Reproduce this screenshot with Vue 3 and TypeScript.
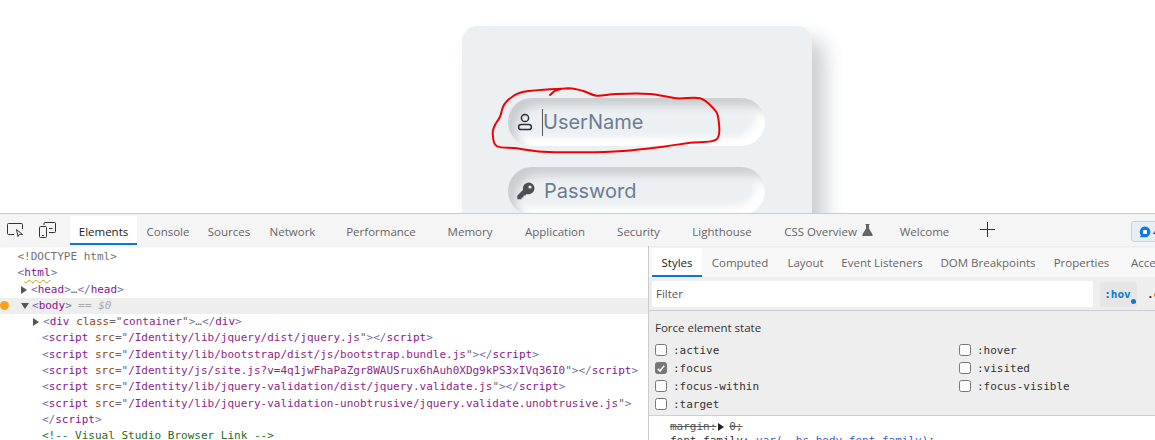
<script setup lang="ts">
const mainTabs = [
  { t: 'Elements', w: 67, active: true },
  { t: 'Console', w: 62 },
  { t: 'Sources', w: 60 },
  { t: 'Network', w: 67 },
  { t: 'Performance', w: 110 },
  { t: 'Memory', w: 68 },
  { t: 'Application', w: 102 },
  { t: 'Security', w: 65 },
  { t: 'Lighthouse', w: 102 },
  { t: 'CSS Overview', w: 111, flask: true },
  { t: 'Welcome', w: 81 },
]
const subTabs = [
  { t: 'Styles', w: 50, active: true },
  { t: 'Computed', w: 76 },
  { t: 'Layout', w: 55 },
  { t: 'Event Listeners', w: 98 },
  { t: 'DOM Breakpoints', w: 114 },
  { t: 'Properties', w: 73 },
  { t: 'Accessibility', w: 90 },
]
const scripts = [
  '/Identity/lib/jquery/dist/jquery.js',
  '/Identity/lib/bootstrap/dist/js/bootstrap.bundle.js',
  '/Identity/js/site.js?v=4q1jwFhaPaZgr8WAUSrux6hAuh0XDg9kPS3xIVq36I0',
  '/Identity/lib/jquery-validation/dist/jquery.validate.js',
]
const states = [
  [':active', ':hover'],
  [':focus', ':visited'],
  [':focus-within', ':focus-visible'],
  [':target', ''],
]
const scribble: number[][] = [
  [550, 95], [556.7, 90], [570, 88.3], [583.3, 91], [596.7, 95.7], [616.7, 94], [650, 94],
  [676.7, 98.3], [700, 98.3], [713.3, 108.3], [718.3, 118.3], [716.7, 139.3], [690, 142.7],
  [663, 146.7], [623, 151], [583, 152.3], [543, 151.7], [516.7, 148.3], [496.7, 146],
  [492.7, 133.3], [495, 125], [500, 116.7], [505, 103.3], [520, 92.7], [550, 89.3], [570, 88.3],
]
function smooth(p: number[][]): string {
  let d = `M${p[0][0]} ${p[0][1]}`
  for (let i = 0; i < p.length - 1; i++) {
    const a = p[Math.max(0, i - 1)], b = p[i], c = p[i + 1], e = p[Math.min(p.length - 1, i + 2)]
    const c1x = b[0] + (c[0] - a[0]) / 6, c1y = b[1] + (c[1] - a[1]) / 6
    const c2x = c[0] - (e[0] - b[0]) / 6, c2y = c[1] - (e[1] - b[1]) / 6
    d += `C${c1x.toFixed(1)} ${c1y.toFixed(1)} ${c2x.toFixed(1)} ${c2y.toFixed(1)} ${c[0]} ${c[1]}`
  }
  return d
}
const scribblePath = smooth(scribble)
</script>

<template>
  <div class="page">
    <section class="site">
      <div class="card">
        <div class="field">
          <svg class="ficon" width="16" height="18" viewBox="0 0 16 18" fill="none" stroke="#2b2f36" stroke-width="1.5">
            <circle cx="8" cy="5" r="3.6" />
            <rect x="1.6" y="11.4" width="12.8" height="5.2" rx="2.6" />
          </svg>
          <span class="caret"></span>
          <span class="ph">UserName</span>
        </div>
        <div class="field">
          <svg class="ficon" width="18" height="18" viewBox="0 0 18 18">
            <path fill="#4d4f54" fill-rule="evenodd" d="M11.6 0.4a5.9 5.9 0 1 1-1.9 11.5l-1.5 1.6H6.5v1.9H4.6v1.9H1.1a.8.8 0 0 1-.8-.8v-2.6a.8.8 0 0 1 .2-.5l5.6-5.6A5.9 5.9 0 0 1 11.6.4ZM13 3.4a1.6 1.6 0 1 0 0 3.2 1.6 1.6 0 0 0 0-3.2Z" />
          </svg>
          <span class="ph pw">Password</span>
        </div>
      </div>
      <svg class="scribble" width="1155" height="213" viewBox="0 0 1155 213" fill="none">
        <path :d="scribblePath" stroke="#f00000" stroke-width="2" stroke-linejoin="round" stroke-linecap="round" />
      </svg>
    </section>

    <section class="devtools">
      <header class="mainbar">
        <div class="tools">
          <svg width="17" height="16" viewBox="0 0 17 16" fill="none" stroke="#333" stroke-width="1">
            <path d="M7 12.5H1.5a1 1 0 0 1-1-1v-9a1 1 0 0 1 1-1h13a1 1 0 0 1 1 1V7" />
            <path d="M9.5 7.5l1.5 7 1.5-2.4 3 .4Z" fill="#fff" />
          </svg>
          <svg width="17" height="16" viewBox="0 0 17 16" fill="none" stroke="#333" stroke-width="1">
            <path d="M5 3V1.5a1 1 0 0 1 1-1h9.500a1 1 0 0 1 1 1v8a1 1 0 0 1-1 1H10" />
            <rect x=".5" y="4.500" width="7" height="11" rx="1" />
            <path d="M10 6.500h3.500M3 13.500h2" />
          </svg>
        </div>
        <div v-for="tab in mainTabs" :key="tab.t" class="mtab" :class="{ on: tab.active }" :style="{ width: tab.w + 'px' }">
          <span>{{ tab.t }}</span>
          <svg v-if="tab.flask" class="flask" width="11" height="12" viewBox="0 0 11 12">
            <path fill="#666" d="M3.500 0h4v1H7v3.500l3.600 6a1 1 0 0 1-.9 1.500H1.300a1 1 0 0 1-.9-1.500L4 4.500V1h-.5Z" />
          </svg>
        </div>
        <svg class="plus" width="15" height="15" viewBox="0 0 15 15" stroke="#333" stroke-width="1">
          <path d="M7.500 0v15M0 7.500h15" />
        </svg>
        <div class="chip">
          <svg width="12" height="12" viewBox="0 0 12 12">
            <path fill="#0f7ae5" d="M6 .5a5.400 5.400 0 0 1 0 10.800H.8l1.200-2A5.400 5.400 0 0 1 6 .5Z" />
            <rect x="4" y="4" width="4" height="4" rx="1" fill="#fff" />
          </svg>
          <span>4</span>
        </div>
      </header>

      <div class="panes">
        <div class="tree">
          <div class="row r0"><span class="doc">&lt;!DOCTYPE html&gt;</span></div>
          <div class="row r0"><span class="b">&lt;</span><span class="tag squig">html</span><span class="b">&gt;</span></div>
          <div class="row r1"><i class="tri right"></i><span class="b">&lt;</span><span class="tag">head</span><span class="b">&gt;</span><span class="dim">…</span><span class="b">&lt;/</span><span class="tag">head</span><span class="b">&gt;</span></div>
          <div class="row r1 sel"><em class="dot"></em><i class="tri down"></i><span class="b">&lt;</span><span class="tag">body</span><span class="b">&gt;</span><span class="eq"> == $0</span></div>
          <div class="row r2"><i class="tri right"></i><span class="b">&lt;</span><span class="tag">div</span> <span class="an">class</span><span class="dim">="</span><span class="av">container</span><span class="dim">"</span><span class="b">&gt;</span><span class="dim">…</span><span class="b">&lt;/</span><span class="tag">div</span><span class="b">&gt;</span></div>
          <div v-for="s in scripts" :key="s" class="row r3"><span class="b">&lt;</span><span class="tag">script</span> <span class="an">src</span><span class="dim">="</span><span class="av">{{ s }}</span><span class="dim">"</span><span class="b">&gt;&lt;/</span><span class="tag">script</span><span class="b">&gt;</span></div>
          <div class="row r3"><span class="b">&lt;</span><span class="tag">script</span> <span class="an">src</span><span class="dim">="</span><span class="av">/Identity/lib/jquery-validation-unobtrusive/jquery.validate.unobtrusive.js</span><span class="dim">"</span><span class="b">&gt;</span></div>
          <div class="row r3"><span class="b">&lt;/</span><span class="tag">script</span><span class="b">&gt;</span></div>
          <div class="row r3"><span class="cm">&lt;!-- Visual Studio Browser Link --&gt;</span></div>
        </div>

        <aside class="side">
          <nav class="subbar">
            <div v-for="tab in subTabs" :key="tab.t" class="stab" :class="{ on: tab.active }" :style="{ width: tab.w + 'px' }">{{ tab.t }}</div>
          </nav>
          <div class="filter">
            <div class="finput">Filter</div>
            <div class="hov">:hov<em></em></div>
            <div class="cls">.cls</div>
          </div>
          <div class="force">
            <div class="ftitle">Force element state</div>
            <div class="grid">
              <template v-for="pair in states" :key="pair[0]">
                <label v-for="st in pair" :key="st + pair[0]" class="st">
                  <template v-if="st">
                    <span class="box" :class="{ checked: st === ':focus' }">
                      <svg v-if="st === ':focus'" width="11" height="11" viewBox="0 0 11 11" fill="none" stroke="#fff" stroke-width="1.800"><path d="M2 5.800l2.400 2.400L9 2.500" /></svg>
                    </span>
                    <span>{{ st }}</span>
                  </template>
                </label>
              </template>
            </div>
          </div>
          <div class="rules">
            <div class="rule"><s class="strike">margin:</s><i class="tri right dark"></i><s class="strike">0;</s></div>
            <div class="rule two"><span class="an2">font-family</span>: <span class="fn">var(--bs-body-font-family)</span>;</div>
          </div>
        </aside>
      </div>
    </section>
  </div>
</template>

<style>
html, body { margin: 0; background: #fff; overflow: hidden; }
</style>

<style scoped>
.page { width: 1155px; height: 440px; overflow: hidden; display: flex; flex-direction: column; background: #fff; font-family: "Open Sans", "Liberation Sans", sans-serif; }
.site { position: relative; height: 213px; flex: none; overflow: hidden; padding-left: 462px; padding-top: 26px; box-sizing: border-box; }
.card { width: 350px; height: 420px; box-sizing: border-box; padding: 72px 47px 0 46px; background: #ecf0f3; border-radius: 15px; box-shadow: 13px 13px 20px #cbced1, -13px -13px 20px #ffffff; display: flex; flex-direction: column; gap: 21px; }
.field { height: 48px; border-radius: 25px; box-shadow: inset 8px 8px 8px #cbced1, inset -8px -8px 8px #ffffff; display: flex; align-items: center; padding-left: 9px; flex: none; }
.ficon { flex: none; }
.caret { width: 1px; height: 27px; background: #555; margin-left: 9px; flex: none; }
.ph { font-family: Inter, "Open Sans", sans-serif; font-size: 20px; color: #6d7c90; margin-left: 0; white-space: nowrap; }
.pw { margin-left: 9px; }
.scribble { position: absolute; left: 0; top: 0; }

.devtools { flex: 1; min-height: 0; display: flex; flex-direction: column; border-top: 1px solid #cdcdcd; background: #fff; font-size: 11.500px; color: #555; }
.mainbar { height: 32px; flex: none; display: flex; align-items: stretch; background: #f5f5f5; box-shadow: 0 1px 2px rgba(0,0,0,.08); position: relative; z-index: 1; }
.tools { width: 70px; flex: none; display: flex; align-items: center; gap: 15px; padding-left: 7px; box-sizing: border-box; }
.mtab { display: flex; align-items: center; justify-content: center; gap: 5px; flex: none; box-sizing: border-box; white-space: nowrap; color: #666; padding-top: 2px; }
.mtab.on { background: #fff; color: #222; border-bottom: 2px solid #0a78d4; padding-top: 3px; margin-bottom: 1px; margin-top: 2px; }
.flask { margin-bottom: 2px; }
.plus { margin: 8px 0 0 15px; flex: none; }
.chip { margin: 7px 0 4px 136px; flex: none; width: 40px; box-sizing: border-box; display: flex; align-items: center; gap: 2px; padding-left: 7px; background: #e9eef5; border: 1px solid #cfcfcf; border-radius: 3px; color: #333; }

.panes { flex: 1; min-height: 0; display: flex; }
.tree { width: 648px; flex: none; padding-top: 3px; overflow: hidden; font-family: "DejaVu Sans Mono", "Liberation Mono", monospace; font-size: 11px; }
.row { height: 16.300px; line-height: 16.300px; white-space: pre; position: relative; box-sizing: border-box; }
.r0 { padding-left: 17.500px; }
.r1 { padding-left: 21px; }
.r2 { padding-left: 33px; }
.r3 { padding-left: 42px; }
.sel { background: #eeeeee; }
.dot { position: absolute; left: 0; top: 3.500px; width: 9px; height: 9px; border-radius: 50%; background: #f9a11b; }
.tri { display: inline-block; margin-right: 4px; vertical-align: middle; }
.tri.right { border-left: 6px solid #555; border-top: 4.500px solid transparent; border-bottom: 4.500px solid transparent; }
.tri.down { border-top: 6px solid #555; border-left: 4.500px solid transparent; border-right: 4.500px solid transparent; margin-right: 3px; }
.tri.dark { border-left-color: #222; margin: 0 5px 0 0; }
.b { color: #6a70a8; }
.tag { color: #881391; }
.squig { text-decoration: underline wavy #c9a100 1px; text-underline-offset: 3px; }
.an { color: #994500; }
.av { color: #8f1f86; }
.dim { color: #666; }
.doc { color: #6c6f75; }
.eq { color: #aaa; font-style: italic; }
.cm { color: #236e25; }

.side { flex: 1; min-width: 0; border-left: 1px solid #ccc; display: flex; flex-direction: column; overflow: hidden; }
.subbar { height: 31px; flex: none; display: flex; padding-left: 3px; background: #f8f8f8; box-sizing: border-box; }
.stab { flex: none; display: flex; align-items: center; justify-content: center; box-sizing: border-box; white-space: nowrap; color: #666; padding-top: 2px; }
.stab.on { background: #fff; color: #222; border-bottom: 2px solid #0a78d4; margin-top: 2px; }
.filter { height: 34px; flex: none; box-sizing: border-box; display: flex; align-items: center; background: #eeeeee; padding: 1px 0 0 3px; border-bottom: 1px solid #c9ccd3; }
.finput { width: 441px; height: 26px; line-height: 26px; background: #fff; border-radius: 2px; padding-left: 4px; box-sizing: border-box; color: #555; flex: none; }
.hov { position: relative; margin-left: 7px; width: 37px; height: 25px; line-height: 25px; text-align: center; background: #e6e6e6; border-radius: 2px; color: #0a78d4; font-family: "DejaVu Sans Mono", monospace; font-size: 11px; font-weight: 700; flex: none; box-sizing: border-box; padding-right: 2px; }
.hov em { position: absolute; right: 1px; bottom: 3px; width: 5px; height: 5px; border-radius: 50%; background: #0a78d4; }
.cls { margin-left: 10px; color: #333; font-family: "DejaVu Sans Mono", monospace; font-size: 11px; font-weight: 700; white-space: nowrap; }
.force { height: 105px; flex: none; box-sizing: border-box; background: #eeeeee; border-bottom: 1px solid #d0d0d0; padding: 9px 0 0 6px; }
.ftitle { color: #333; line-height: 16px; }
.grid { display: grid; grid-template-columns: 304px 1fr; grid-auto-rows: 18px; margin-top: 5px; font-family: "DejaVu Sans Mono", monospace; font-size: 11px; color: #333; }
.st { display: flex; align-items: center; gap: 6px; }
.box { width: 12px; height: 12px; flex: none; box-sizing: border-box; background: #fff; border: 1px solid #777; border-radius: 2.500px; display: flex; align-items: center; justify-content: center; }
.box.checked { background: #777; }
.rules { flex: 1; min-height: 0; padding: 4px 0 0 21px; font-family: "DejaVu Sans Mono", monospace; font-size: 11px; color: #333; }
.rule { height: 13px; line-height: 13px; white-space: nowrap; }
.strike { color: #555; text-decoration: line-through; margin-right: 2px; }
.two { margin-top: 1px; }
.an2 { color: #333; }
.fn { color: #3a5fc8; }
</style>
